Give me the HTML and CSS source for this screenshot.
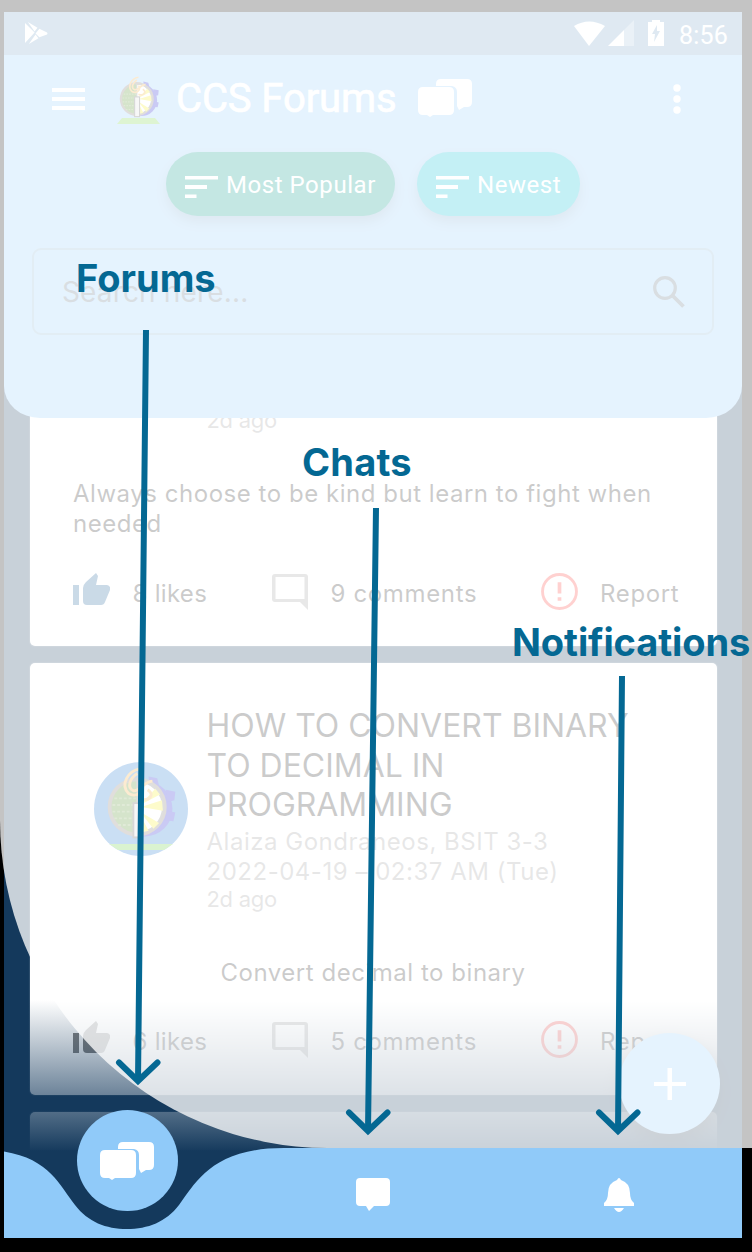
FILE: index.html
```
<!DOCTYPE html>
<html lang="en">
<head>
<meta charset="utf-8">
<title>CCS Forums</title>
<link rel="stylesheet" href="styles.css">
</head>
<body>
<svg class="defs" width="0" height="0">
  <symbol id="seal" viewBox="0 0 84 84">
    <g fill="#1a1ad0"><circle cx="46" cy="46" r="29"/><path d="M50 12l9 2 2 8-10 2zM68 26l10 2-1 9-8 2zM70 48l8 2-2 9-9-1z"/></g>
    <circle cx="38" cy="44" r="31" fill="#7a7068"/>
    <circle cx="38" cy="44" r="27" fill="#4b8a22"/>
    <path d="M38 17a27 27 0 0 1 0 54z" fill="#fff" stroke="#777" stroke-width="2"/>
    <path d="M41 42l16-17 5 6zM42 44l22-7 1 11zM41 49l20 12-6 6zM41 52l9 17-8 2z" fill="#f4ee22"/>
    <path d="M14 35h24M12 42h24M12 49h24M14 56h24M18 63h18" stroke="#79a355" stroke-width="2" stroke-dasharray="3 2"/>
    <rect x="34" y="40" width="9" height="36" fill="#ddd" stroke="#555" stroke-width="2"/>
    <path d="M41 4C28 6 20 21 29 30c8 5 18-3 12-11M38 9c-8 5-11 15-4 18 7 1 10-9 20-10M41 35c8 4 17-3 8-9" fill="none" stroke="#f0a838" stroke-width="3"/>
  </symbol>
  <symbol id="chats" viewBox="0 0 54 38">
    <path d="M23 0h26q5 0 5 5v18q0 5-5 5h-3l-5 3-2-4V13q0-5-5-6H18V5q0-5 5-5z"/>
    <path d="M5 8h26q5 0 5 5v18q0 5-5 5H15l-3 2-3-2H5q-5 0-5-5V13q0-5 5-5z"/>
  </symbol>
  <symbol id="thumb" viewBox="0 0 37 33"><path d="M0 12h6v20H0zM10 15q0-3 3-6L23 0l2 3-2 9h11q4 1 3 5l-5 12q-1 3-4 3H14q-4 0-4-4z"/></symbol>
  <symbol id="bubble" viewBox="0 0 36 36"><path fill-rule="evenodd" d="M3 0h30q3 0 3 3v33l-8-8H3q-3 0-3-3V3q0-3 3-3zm.5 3v22h29V3z"/></symbol>
  <symbol id="alert" viewBox="0 0 36 36"><circle cx="18" cy="18" r="16.500" fill="none" stroke="currentColor" stroke-width="2.800"/><path d="M16.200 9h3.600v11h-3.600zM16.200 23.500h3.600V27h-3.600z"/></symbol>
  <symbol id="sort" viewBox="0 0 34 24"><path d="M0 1h33v3.500H0zM0 10h22v4H0zM0 19.500h11.500V23H0z"/></symbol>
</svg>

<main class="screen">
  <div class="phone">
    <header class="header">
      <div class="status">
        <svg class="play" viewBox="0 0 24 24"><path d="M0 1v21l10-11zM3 0l10 6-3 4zM15 7l8 4q1 1 0 2l-8 3-4-4zM4 23l10-6-3-4z"/></svg>
        <svg class="signals" viewBox="0 0 94 27"><path d="M1 6Q16-3 32 6L16 26zM35 26L51 10v16zM75 2h4V0h8v2h4v24H75z"/><path d="M51 10l10-10v26H51z" opacity=".35"/><path d="M84 5l-5 9h3l-1 8 6-11h-3z" fill="#74a2c8"/></svg>
        <span class="clock">8:56</span>
      </div>
      <div class="toolbar">
        <svg class="menu" viewBox="0 0 33 22"><path d="M0 0h33v4H0zM0 9h33v4H0zM0 18h33v4H0z"/></svg>
        <svg class="logo" viewBox="0 0 44 52"><use href="#seal" x="-1" y="0" width="46" height="50"/><path d="M5 45h33l5 6H0z" fill="#70d03c"/></svg>
        <h1 class="title">CCS Forums</h1>
        <svg class="chats"><use href="#chats"/></svg>
        <svg class="more" viewBox="0 0 8 30"><circle cx="4" cy="4" r="3.700"/><circle cx="4" cy="15" r="3.700"/><circle cx="4" cy="26" r="3.700"/></svg>
      </div>
      <div class="filters">
        <button class="pill popular"><svg><use href="#sort"/></svg><span>Most Popular</span></button>
        <button class="pill newest"><svg><use href="#sort"/></svg><span>Newest</span></button>
      </div>
      <div class="search"><span>Search here...</span>
        <svg viewBox="0 0 32 32"><circle cx="12" cy="12" r="10.300" fill="none" stroke="currentColor" stroke-width="3.200"/><path d="M20 20l10.500 10.500" stroke="currentColor" stroke-width="3.800"/></svg>
      </div>
    </header>

    <section class="feed">
      <article class="card first">
        <p class="ago">2d ago</p>
        <p class="body">Always choose to be kind but learn to fight when needed</p>
        <div class="actions">
          <svg class="thumb liked"><use href="#thumb"/></svg><span>8 likes</span>
          <svg class="bubble"><use href="#bubble"/></svg><span>9 comments</span>
          <svg class="alert"><use href="#alert"/></svg><span>Report</span>
        </div>
      </article>
      <article class="card second">
        <div class="post-head">
          <svg class="avatar" viewBox="0 0 94 94"><circle cx="47" cy="47" r="47" fill="#1a74d0"/><path d="M15 82h64l-9 6H24z" fill="#62c935"/><use href="#seal" x="7" y="3" width="80" height="80"/></svg>
          <div class="info">
            <h2>HOW TO CONVERT BINARY<br>TO DECIMAL IN<br>PROGRAMMING</h2>
            <p class="meta author">Alaiza Gondraneos, BSIT 3-3</p>
            <p class="meta date">2022-04-19 – 02:37 AM (Tue)</p>
            <p class="ago">2d ago</p>
          </div>
        </div>
        <p class="body centered">Convert decimal to binary</p>
        <div class="actions">
          <svg class="thumb"><use href="#thumb"/></svg><span>6 likes</span>
          <svg class="bubble"><use href="#bubble"/></svg><span>5 comments</span>
          <svg class="alert"><use href="#alert"/></svg><span>Report</span>
        </div>
      </article>
      <article class="card third"></article>
    </section>
    <div class="fade"></div>
    <button class="fab" aria-label="New post"><svg viewBox="0 0 32 32"><path d="M13.500 0h4.500v14h14v4H18v14h-4.500V18H0v-4h13.500z"/></svg></button>
    <nav class="nav">
      <svg class="nav-shape" viewBox="0 0 738 90"><path d="M0 3.500C46 11 56 38 71 57c13 17 31 24 52 24s39-7 52-24c17-23 34-57 105-57h458v90H0z"/></svg>
      <span class="nav-icon selected"><svg class="chats"><use href="#chats"/></svg></span>
      <span class="nav-icon"><svg class="chat" viewBox="0 0 34 34"><path d="M4 0h26q4 0 4 4v20q0 4-4 4H18l-5 5-3-5H4q-4 0-4-4V4q0-4 4-4z"/></svg></span>
      <span class="nav-icon"><svg class="bell" viewBox="0 0 30 34"><path d="M13 2q2-4 4 0 9 3 9 13 0 7 4 10v3H0v-3q4-3 4-10Q4 5 13 2zM10 30h10q-5 8-10 0z"/></svg></span>
    </nav>
  </div>

  <div class="veil"></div>
  <div class="guide">
    <svg viewBox="0 0 752 1252"><g fill="none" stroke="#046893" stroke-width="6">
      <path d="M146 330L138 1081M376 508L368 1131M622 676L618 1131"/>
      <path d="M119 1062.500L138 1081L157.500 1062.500M349 1112.500L368 1131L387.500 1112.500M599 1112.500L618 1131L637.500 1112.500" stroke-linecap="round"/>
    </g></svg>
    <strong class="label forums">Forums</strong>
    <strong class="label chats-label">Chats</strong>
    <strong class="label notifications">Notifications</strong>
  </div>
</main>
</body>
</html>
```
FILE: styles.css
```
* { box-sizing: border-box; }
body { margin: 0; background: #000; font-family: Inter, "Liberation Sans", sans-serif; }
h1, h2, p { margin: 0; font-weight: 400; }
svg { display: block; fill: currentColor; flex: none; }
button { border: 0; padding: 0; color: #fff; }
.defs { position: absolute; }
.screen { position: relative; width: 752px; height: 1252px; padding: 12px 10px 14px 4px; overflow: hidden; }
.phone { position: relative; display: flex; flex-direction: column; width: 738px; height: 1226px; background: #14395c; overflow: hidden; }

.header { position: relative; z-index: 2; flex: none; height: 405.500px; background: #90caf9; border-radius: 0 0 36px 36px / 0 0 32px 32px; color: #fff; }
.status { display: flex; align-items: center; height: 43px; padding: 0 14px 0 21px; background: #74a2c8; }
.play { width: 23px; height: 23px; }
.signals { width: 94px; height: 27px; margin-left: auto; margin-top: -1px; }
.clock { font: 25px/44px Roboto, sans-serif; letter-spacing: .2px; margin-left: 12px; padding-top: 4px; }
.toolbar { display: flex; align-items: center; height: 87px; padding: 0 61px 0 48px; }
.menu { width: 33px; height: 22px; }
.logo { width: 44px; height: 52px; margin-left: 32px; }
.title { font: 400 40px/48px Roboto, sans-serif; letter-spacing: -.1px; -webkit-text-stroke: .6px currentColor; margin-left: 15px; width: 242px; white-space: nowrap; }
.chats { width: 54px; height: 38px; }
.toolbar .chats { margin-top: -2px; }
.more { width: 8px; height: 30px; margin-left: auto; }
.filters { display: flex; gap: 22px; margin: 10px 0 0 162px; }
.pill { display: flex; align-items: center; height: 64px; border-radius: 32px; font: 24px/28px Roboto, sans-serif; letter-spacing: .55px; box-shadow: 0 6px 12px #00000035; white-space: nowrap; }
.pill svg { width: 34px; height: 24px; margin: 6px 7px 0 19px; }
.pill span { padding-top: 2px; }
.popular { width: 229px; background: #009688; }
.newest { width: 163px; background: #00bcd4; }
.search { display: flex; align-items: center; justify-content: space-between; width: 682px; height: 87px; margin: 32px 0 0 28px; padding: 0 27px 0 28px; border: 2px solid #83b0d0; border-radius: 9px; color: #5b7080; }
.search span { font-size: 28px; letter-spacing: .15px; }
.search svg { width: 32px; height: 32px; }

.feed { flex: none; display: flex; flex-direction: column; gap: 17px; padding: 0 25.500px; margin-top: -12px; color: #222; }
.card { background: #fff; border-radius: 5px; box-shadow: 0 0 1px 1px #ffffff20; flex: none; }
.first { height: 240.500px; }
.second { height: 432px; padding-top: 43px; }
.third { height: 38px; border-radius: 5px 5px 0 0; }
.ago { font-size: 22px; line-height: 26px; color: #999; letter-spacing: -.3px; }
.first .ago { padding: 1px 0 0 177px; }
.body { font-size: 24px; line-height: 30px; letter-spacing: .53px; }
.first .body { margin: 46px 30px 0 43.500px; }
.actions { display: grid; grid-template-columns: 59.500px 139px 59px 210px 59.500px auto; align-items: center; height: 40px; margin-left: 43.500px; font-size: 24px; letter-spacing: .65px; white-space: nowrap; }
.actions span { padding-top: 3px; }
.actions .thumb + span { letter-spacing: .3px; }
.first .actions { margin-top: 33px; }
.thumb { width: 37px; height: 33px; margin-top: -4px; color: #808080; }
.liked { color: #1d5f99; }
.bubble { width: 36px; height: 36px; color: #9a9a9a; }
.alert { width: 37px; height: 37px; color: #ff3a34; }
.post-head { display: flex; }
.avatar { width: 94px; height: 94px; margin: 56px 19px 0 64px; }
h2 { font-size: 32px; line-height: 39.500px; letter-spacing: -.03px; white-space: nowrap; }
.meta { color: #999; font-size: 24px; line-height: 30px; letter-spacing: .52px; white-space: nowrap; }
.author { margin-top: 2px; }
.second .ago { margin-top: -1px; }
.centered { margin-top: 46px; text-align: center; }
.second .actions { margin-top: 32px; }
.fade { position: absolute; inset: 988px 0 86px; background: linear-gradient(#14395c00, #14395c); }
.fab { position: absolute; left: 615px; top: 1021px; width: 101px; height: 101px; display: grid; place-items: center; border-radius: 50%; background: #90caf9; box-shadow: 0 8px 16px #0004; }
.fab svg { width: 32px; height: 32px; }
.nav { position: absolute; inset: auto 0 0; height: 90px; display: grid; grid-template-columns: repeat(3, 246px); justify-items: center; align-items: center; color: #fff; }
.nav-shape { position: absolute; width: 738px; height: 90px; color: #90caf9; }
.nav-icon { position: relative; top: -4px; }
.selected { display: grid; place-items: center; width: 101px; height: 101px; border-radius: 50%; background: #90caf9; top: -38px; }
.chat { width: 34px; height: 34px; }
.bell { width: 30px; height: 34px; }

.veil { position: absolute; z-index: 3; inset: 0 0 104px; background: #ffffffc4; border-bottom-left-radius: 328px; }
.guide { position: absolute; z-index: 4; inset: 0; color: #046893; }
.guide svg { width: 752px; height: 1252px; }
.label { position: absolute; font-size: 38px; line-height: 48px; font-weight: 700; white-space: nowrap; }
.forums { left: 76px; top: 254px; }
.chats-label { left: 302px; top: 438px; letter-spacing: .2px; }
.notifications { left: 512px; top: 618px; letter-spacing: -.1px; }
```
